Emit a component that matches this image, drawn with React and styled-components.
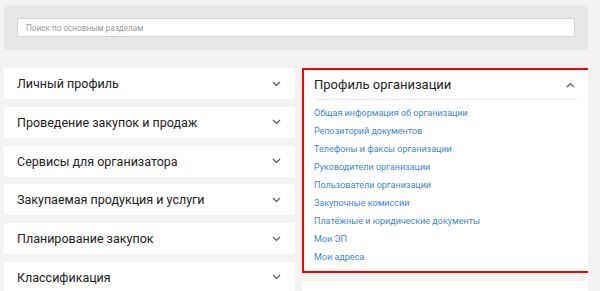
import React from "react"
import styled, { createGlobalStyle } from "styled-components"

const sections = [
  "Личный профиль",
  "Проведение закупок и продаж",
  "Сервисы для организатора",
  "Закупаемая продукция и услуги",
  "Планирование закупок",
  "Классификация",
]

const orgLinks = [
  "Общая информация об организации",
  "Репозиторий документов",
  "Телефоны и факсы организации",
  "Руководители организации",
  "Пользователи организации",
  "Закупочные комиссии",
  "Платёжные и юридические документы",
  "Мои ЭП",
  "Мои адреса",
]

function Chevron({ up }) {
  return (
    <svg width="9" height="6" viewBox="0 0 9 6">
      <polyline
        points={up ? "1,5 4.5,1.5 8,5" : "1,1 4.5,4.5 8,1"}
        fill="none"
        stroke="#555"
        strokeWidth="1.2"
      />
    </svg>
  )
}

export default function App() {
  return (
    <>
      <GlobalStyle />
      <Page>
        <SearchPanel>
          <SearchInput placeholder="Поиск по основным разделам" />
        </SearchPanel>
        <Columns>
          <Column>
            {sections.map((s) => (
              <Card key={s}>
                <span>{s}</span>
                <Chevron />
              </Card>
            ))}
          </Column>
          <Column>
            <OpenCard>
              <OpenHeader>
                <span>Профиль организации</span>
                <Chevron up />
              </OpenHeader>
              <LinkList>
                {orgLinks.map((l) => (
                  <li key={l}>
                    <a href="#">{l}</a>
                  </li>
                ))}
              </LinkList>
            </OpenCard>
            <Card>
              <span>Управление</span>
              <Chevron />
            </Card>
          </Column>
        </Columns>
      </Page>
    </>
  )
}

const GlobalStyle = createGlobalStyle`
  body {
    margin: 0;
    background: #f4f3f1;
    font-family: Roboto, "Liberation Sans", Arial, sans-serif;
  }
`

const Page = styled.div`
  width: 588px;
  padding: 5px 0 0 4px;
  height: 291px;
  overflow: hidden;
  box-sizing: border-box;
`

const SearchPanel = styled.div`
  background: #e8e8e8;
  border-radius: 4px;
  padding: 13px 13px 13px 13px;
  height: 45px;
  box-sizing: border-box;
`

const SearchInput = styled.input`
  display: block;
  width: 100%;
  height: 19px;
  box-sizing: border-box;
  border: 1px solid #d4d4d4;
  background: #fff;
  padding: 0 8px;
  font-family: Roboto, "Liberation Sans", Arial, sans-serif;
  font-size: 8.2px;
  outline: none;
  &::placeholder {
    color: #9a9a9a;
  }
`

const Columns = styled.div`
  display: grid;
  grid-template-columns: 291px 290px;
  column-gap: 7px;
  margin-top: 18px;
`

const Column = styled.div`
  display: flex;
  flex-direction: column;
  gap: 7.8px;
`

const Card = styled.div`
  height: 31px;
  flex-shrink: 0;
  background: #fff;
  border-radius: 3px;
  display: flex;
  align-items: center;
  justify-content: space-between;
  padding: 0 14px 0 13px;
  font-size: 12.5px;
  color: #222;
`

const OpenCard = styled.div`
  background: #fff;
  border: 2px solid #ff0000;
  padding: 0 13px 5px 10px;
`

const OpenHeader = styled.div`
  height: 29px;
  display: flex;
  align-items: center;
  justify-content: space-between;
  border-bottom: 1px solid #e6e6e6;
  font-size: 13px;
  color: #222;
  padding-right: 2px;
`

const LinkList = styled.ul`
  list-style: none;
  margin: 0;
  padding: 4px 0 0;
  li {
    height: 18px;
    display: flex;
    align-items: center;
  }
  a {
    font-size: 9px;
    color: #3f87cc;
    text-decoration: none;
  }
`
